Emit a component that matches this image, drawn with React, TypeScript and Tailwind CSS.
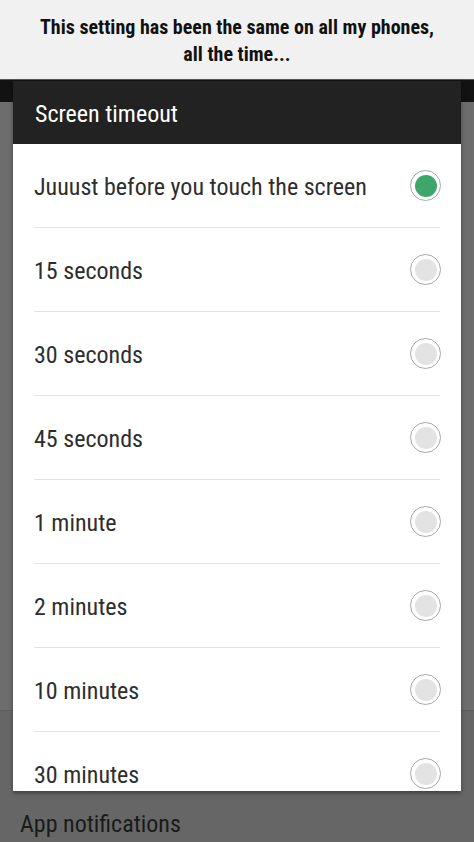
import React from "react";

const items = [
  "Juuust before you touch the screen",
  "15 seconds",
  "30 seconds",
  "45 seconds",
  "1 minute",
  "2 minutes",
  "10 minutes",
  "30 minutes",
];

const font = { fontFamily: '"Roboto Condensed", "Liberation Sans Narrow", Roboto, sans-serif' };

function Radio({ on }: { on: boolean }) {
  return (
    <div className="w-[31px] h-[31px] rounded-full border-[1.5px] border-[#a9a9a9] flex items-center justify-center bg-white shrink-0">
      <div className={`w-[22px] h-[22px] rounded-full ${on ? "bg-[#3fa66b]" : "bg-[#e3e3e3]"}`} />
    </div>
  );
}

export default function App() {
  return (
    <div className="w-[474px] h-[842px] overflow-hidden bg-[#666666] flex flex-col" style={font}>
      <div className="h-[80px] bg-[#f1f1f1] border-b border-[#555] flex flex-col items-center justify-center shrink-0">
        <p className="text-[20px] leading-[27px] font-bold text-[#111] text-center pt-[3px]">
          This setting has been the same on all my phones,
          <br />
          all the time...
        </p>
      </div>
      <div className="relative flex-1">
        <div className="h-[22px] bg-[#121212]" />
        <div className="h-[609px] bg-[#6d6d6d] border-b border-[#5d5d5d]" />
        <div className="pl-[20px] pt-[97px] text-[24px] leading-[32px] text-[#1a1a1a]">App notifications</div>
        <div className="absolute left-[13px] top-[1px] w-[448px] h-[710px] bg-white overflow-hidden shadow-[0_2px_4px_rgba(0,0,0,0.4)]">
          <div className="h-[63px] bg-[#222222] flex items-center pl-[22px] pt-[3px] text-[24px] text-white">Screen timeout</div>
          {items.map((t, i) => (
            <div key={i} className="h-[84px] mx-[21px] flex items-center justify-between border-b border-[#e2e2e2]">
              <span className="text-[24px] text-[#2e2e2e] pt-[2px]">{t}</span>
              <div className="mr-[-1px]"><Radio on={i === 0} /></div>
            </div>
          ))}
        </div>
      </div>
    </div>
  );
}
